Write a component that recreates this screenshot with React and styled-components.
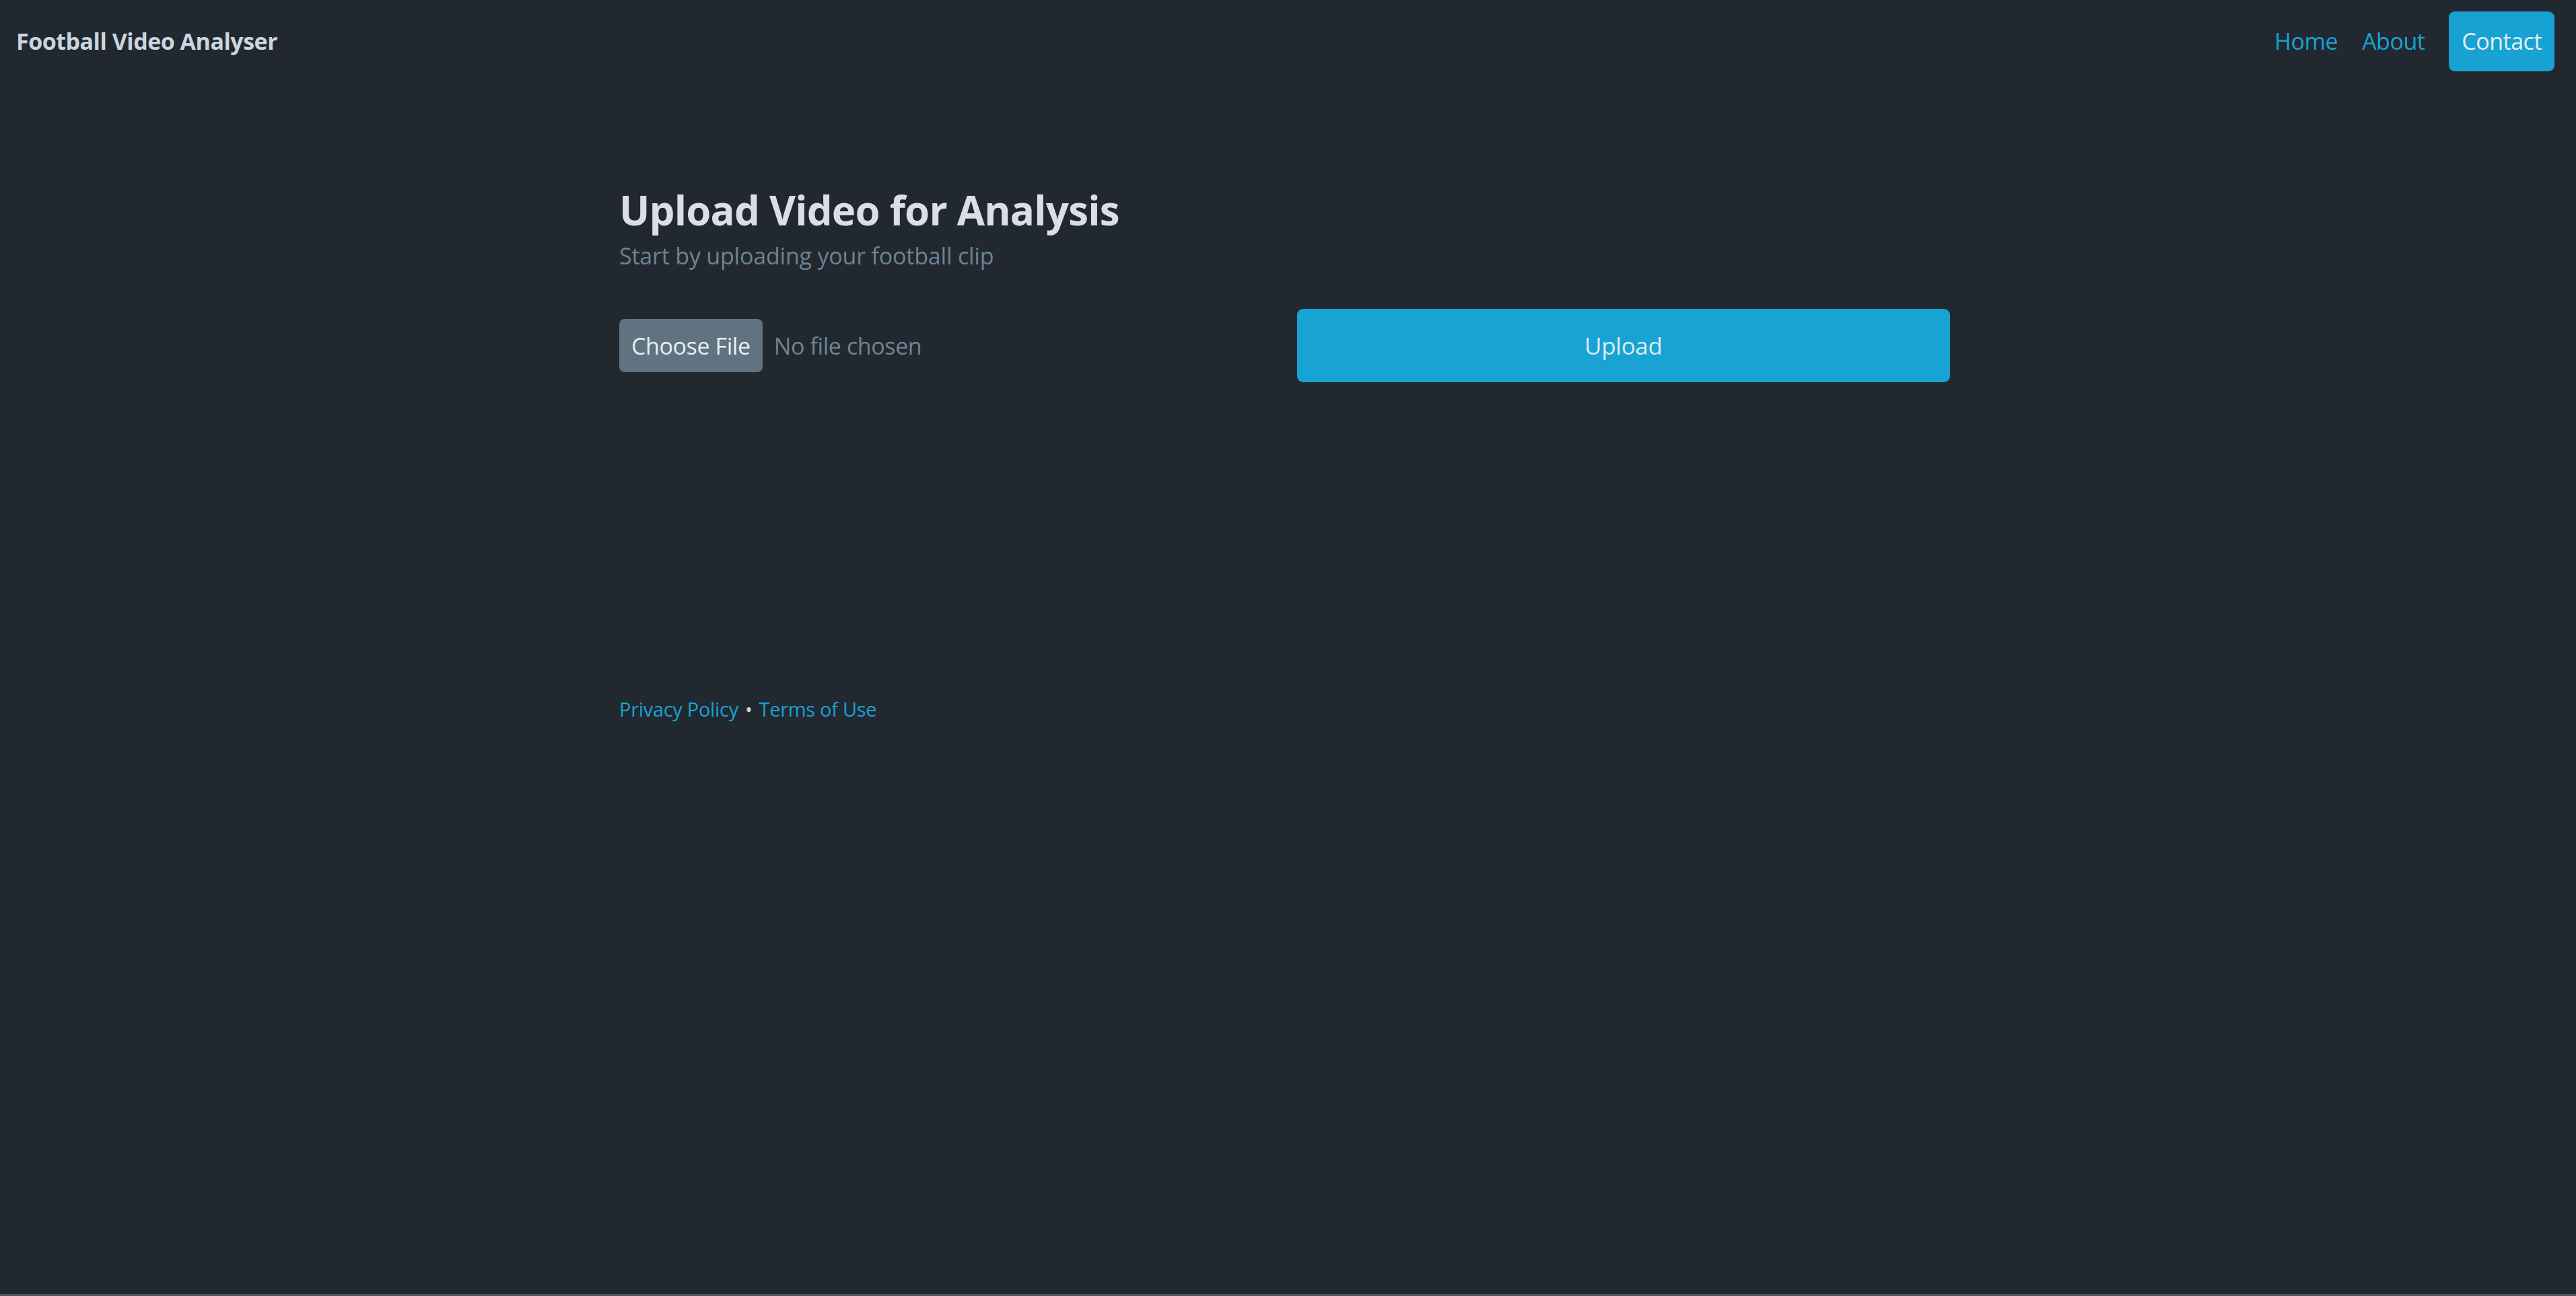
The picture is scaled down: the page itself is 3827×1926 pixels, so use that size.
import styled, { createGlobalStyle } from "styled-components";

const GlobalStyle = createGlobalStyle`
  * { box-sizing: border-box; }
  html, body {
    margin: 0;
    padding: 0;
    background: #222830;
  }
  body {
    font-family: "Open Sans", "Noto Sans", sans-serif;
    color: #d7dee4;
  }
`;

export default function App() {
  return (
    <Page>
      <GlobalStyle />
      <Nav>
        <Brand>Football Video Analyser</Brand>
        <Links>
          <NavLink href="#">Home</NavLink>
          <NavLink href="#">About</NavLink>
          <NavLink href="#" $active>
            Contact
          </NavLink>
        </Links>
      </Nav>
      <Main>
        <Heading>
          <h1>Upload Video for Analysis</h1>
          <p>Start by uploading your football clip</p>
        </Heading>
        <UploadForm onSubmit={(e) => e.preventDefault()}>
          <FileInput type="file" accept="video/*" />
          <UploadButton type="submit">Upload</UploadButton>
        </UploadForm>
        <Footer>
          <a href="#">Privacy Policy</a>
          <span>•</span>
          <a href="#">Terms of Use</a>
        </Footer>
      </Main>
    </Page>
  );
}

const Page = styled.div`
  min-height: 100vh;
  background: #222830;
  border-bottom: 3px solid #4d5662;
`;

const Nav = styled.nav`
  display: flex;
  align-items: center;
  justify-content: space-between;
  height: 122px;
  padding: 0 32px 0 24px;
`;

const Brand = styled.div`
  font-size: 34px;
  font-weight: 700;
  color: #c9d6df;
  letter-spacing: -0.5px;
`;

const Links = styled.div`
  display: flex;
  align-items: center;
  gap: 36px;
`;

const NavLink = styled.a`
  display: flex;
  align-items: center;
  height: 89px;
  font-size: 34px;
  text-decoration: none;
  color: ${(p) => (p.$active ? "#e4eef3" : "#17a2d3")};
  background: ${(p) => (p.$active ? "#17a2d3" : "transparent")};
  padding: ${(p) => (p.$active ? "0 19px" : "0")};
  border-radius: 9px;
  letter-spacing: -0.5px;
`;

const Main = styled.main`
  width: 1987px;
  margin: 0 auto;
  padding: 152px 10px 0 0;
`;

const Heading = styled.header`
  h1 {
    margin: 0;
    font-size: 60px;
    line-height: 76px;
    font-weight: 700;
    color: #d9dfe5;
    letter-spacing: -0.8px;
  }
  p {
    margin: 4px 0 0;
    font-size: 34px;
    line-height: 52px;
    color: #6c8391;
    letter-spacing: -0.2px;
  }
`;

const UploadForm = styled.form`
  display: grid;
  grid-template-columns: 1fr 1fr;
  gap: 36px;
  align-items: center;
  margin-top: 53px;
`;

const FileInput = styled.input`
  font-family: "Open Sans", "Noto Sans", sans-serif;
  font-size: 34px;
  color: #6e8592;
  letter-spacing: -0.4px;

  &::file-selector-button {
    font-family: inherit;
    font-size: 34px;
    letter-spacing: -0.4px;
    height: 79px;
    padding: 0 18px;
    margin-right: 17px;
    border: none;
    border-radius: 8px;
    background: #5f7480;
    color: #e8eef2;
    cursor: pointer;
  }
`;

const UploadButton = styled.button`
  height: 109px;
  border: none;
  border-radius: 9px;
  background: #17a3d4;
  color: #dceaf1;
  font-family: inherit;
  font-size: 35px;
  letter-spacing: -0.4px;
  cursor: pointer;
`;

const Footer = styled.footer`
  display: flex;
  align-items: center;
  gap: 10px;
  margin-top: 460px;
  font-size: 29px;
  line-height: 51px;
  letter-spacing: -0.3px;

  a {
    color: #17a2d3;
    text-decoration: none;
  }
  span {
    color: #c9d6df;
  }
`;
